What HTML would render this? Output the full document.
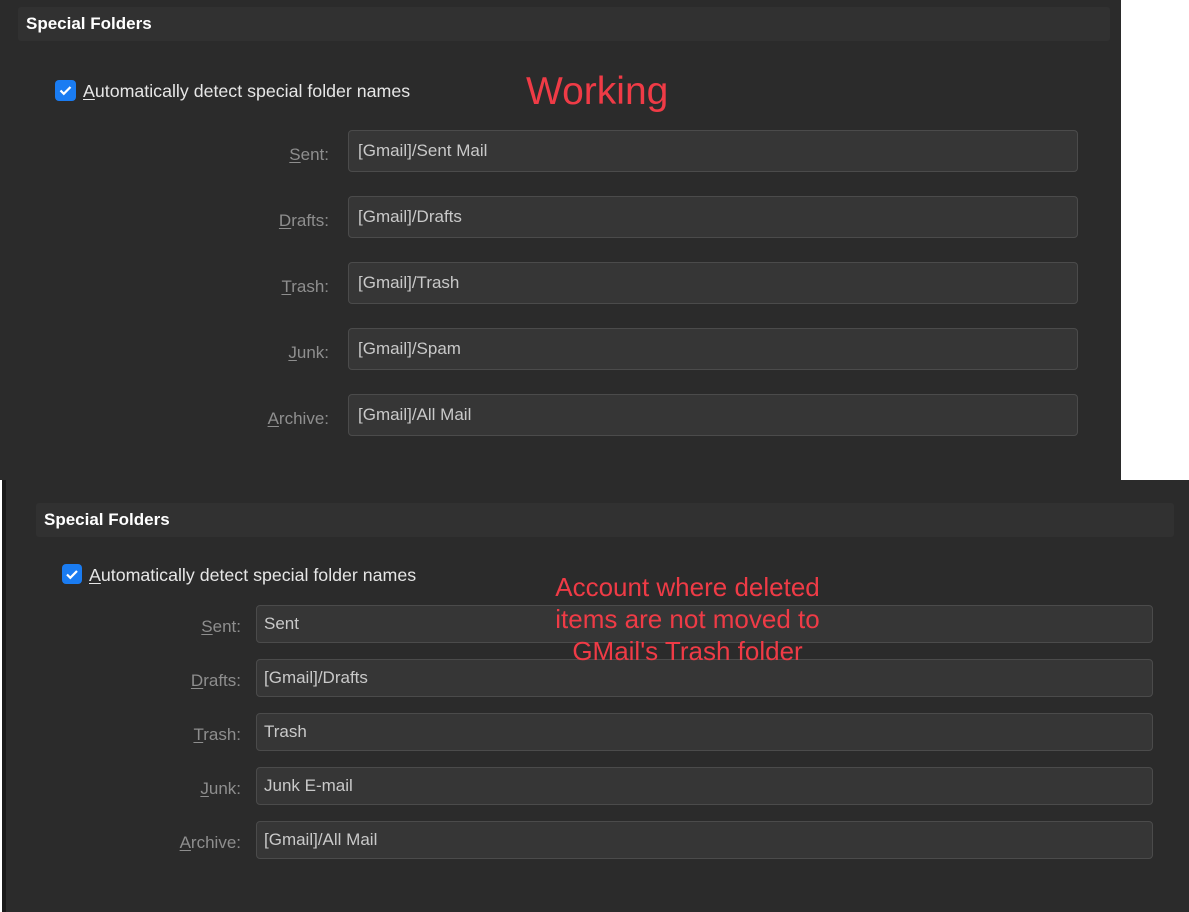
<!DOCTYPE html>
<html><head><style>
*{margin:0;padding:0;box-sizing:border-box}
body{width:1189px;height:912px;background:#fff;position:relative;overflow:hidden;font-family:"Liberation Sans","DejaVu Sans",sans-serif}
.p{position:absolute;background:#2b2b2b}
.hd{position:absolute;background:#313131;border-radius:3px;color:#fff;font-weight:bold;font-size:17px;padding-left:8px;display:flex;align-items:center}
.cb{position:absolute;width:21px;height:21px;background:#1a7cf2;border-radius:4px}
.cb svg{position:absolute;left:3px;top:3px}
.ct{position:absolute;color:#e6e6e6;font-size:17.8px}
.lb{position:absolute;color:#8e8e8e;font-size:17px;text-align:right}
.in{position:absolute;background:#363636;border:1px solid #4b4b4b;border-radius:4px;color:#c9c9c9;font-size:17px;padding-left:9px;display:flex;align-items:center}
u{text-decoration:underline;text-underline-offset:2px}
.red{position:absolute;z-index:5;color:#ef3b46;font-family:"Liberation Sans",Arial,sans-serif}
</style></head><body>
<div class="p" style="left:0;top:0;width:1121px;height:480px"></div>
<div class="p" style="left:0;top:480px;width:1189px;height:432px;border-left:2px solid #fff"></div>
<div style="position:absolute;left:2px;top:480px;width:4px;height:432px;background:#1a1a1a"></div>

<div class="hd" style="left:18px;top:7px;width:1092px;height:34px">Special Folders</div>
<div class="cb" style="left:55px;top:80px"><svg width="15" height="15" viewBox="0 0 15 15"><path d="M2.5 7.5l3.3 3.3L12.5 4" stroke="#fff" stroke-width="2.2" fill="none"/></svg></div>
<div class="ct" style="left:83px;top:81px"><u>A</u>utomatically detect special folder names</div>
<div class="red" style="left:526px;top:70px;font-size:39px">Working</div>

<div class="lb" style="left:200px;width:129px;top:145px"><u>S</u>ent:</div>
<div class="in" style="left:348px;top:130px;width:730px;height:42px">[Gmail]/Sent Mail</div>
<div class="lb" style="left:200px;width:129px;top:211px"><u>D</u>rafts:</div>
<div class="in" style="left:348px;top:196px;width:730px;height:42px">[Gmail]/Drafts</div>
<div class="lb" style="left:200px;width:129px;top:277px"><u>T</u>rash:</div>
<div class="in" style="left:348px;top:262px;width:730px;height:42px">[Gmail]/Trash</div>
<div class="lb" style="left:200px;width:129px;top:343px"><u>J</u>unk:</div>
<div class="in" style="left:348px;top:328px;width:730px;height:42px">[Gmail]/Spam</div>
<div class="lb" style="left:200px;width:129px;top:409px"><u>A</u>rchive:</div>
<div class="in" style="left:348px;top:394px;width:730px;height:42px">[Gmail]/All Mail</div>

<div class="hd" style="left:36px;top:503px;width:1138px;height:34px">Special Folders</div>
<div class="cb" style="left:62px;top:564px;width:20px;height:20px"><svg width="15" height="15" viewBox="0 0 15 15"><path d="M2 7.5l3.3 3.3L12 4" stroke="#fff" stroke-width="2.2" fill="none"/></svg></div>
<div class="ct" style="left:89px;top:565px"><u>A</u>utomatically detect special folder names</div>
<div class="red" style="left:530px;top:571px;width:315px;font-size:26px;line-height:32px;text-align:center">Account where deleted items are not moved to GMail's Trash folder</div>

<div class="lb" style="left:120px;width:121px;top:617px"><u>S</u>ent:</div>
<div class="in" style="left:256px;top:605px;width:897px;height:38px;padding-left:7px">Sent</div>
<div class="lb" style="left:120px;width:121px;top:671px"><u>D</u>rafts:</div>
<div class="in" style="left:256px;top:659px;width:897px;height:38px;padding-left:7px">[Gmail]/Drafts</div>
<div class="lb" style="left:120px;width:121px;top:725px"><u>T</u>rash:</div>
<div class="in" style="left:256px;top:713px;width:897px;height:38px;padding-left:7px">Trash</div>
<div class="lb" style="left:120px;width:121px;top:779px"><u>J</u>unk:</div>
<div class="in" style="left:256px;top:767px;width:897px;height:38px;padding-left:7px">Junk E-mail</div>
<div class="lb" style="left:120px;width:121px;top:833px"><u>A</u>rchive:</div>
<div class="in" style="left:256px;top:821px;width:897px;height:38px;padding-left:7px">[Gmail]/All Mail</div>
</body></html>
